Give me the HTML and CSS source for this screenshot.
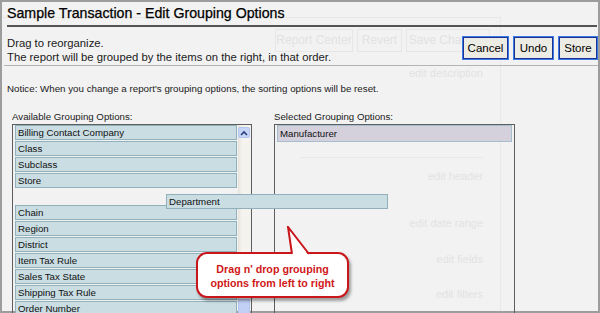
FILE: index.html
```html
<!DOCTYPE html>
<html lang="en">
<head>
  <meta charset="UTF-8">
  <title>Sample Transaction - Edit Grouping Options</title>
  <link rel="stylesheet" href="styles.css">
</head>
<body>
  <!-- page behind the dialog, washed out -->
  <div class="ghost">
    <div class="ghost-btns">
      <span class="gb1">Report Center</span>
      <span class="gb2">Revert</span>
      <span class="gb3">Save Changes</span>
    </div>
    <div class="ghost-links">
      <span class="gl1">edit description</span>
      <span class="ghost-sep"></span>
      <span class="gl2">edit header</span>
      <span class="gl3">edit date range</span>
      <span class="gl4">edit fields</span>
      <span class="gl5">edit filters</span>
    </div>
  </div>

  <div class="dialog">
    <h1 class="title">Sample Transaction - Edit Grouping Options</h1>

    <div class="head">
      <div class="intro">
        <div>Drag to reorganize.</div>
        <div>The report will be grouped by the items on the right, in that order.</div>
      </div>
      <div class="actions">
        <button class="btn">Cancel</button>
        <button class="btn">Undo</button>
        <button class="btn">Store</button>
      </div>
    </div>

    <div class="notice">Notice: When you change a report's grouping options, the sorting options will be reset.</div>

    <div class="columns">
      <div class="col">
        <div class="label">Available Grouping Options:</div>
        <div class="box">
          <div class="list">
            <div class="item">Billing Contact Company</div>
            <div class="item">Class</div>
            <div class="item">Subclass</div>
            <div class="item">Store</div>
            <div class="slot"></div>
            <div class="item">Chain</div>
            <div class="item">Region</div>
            <div class="item">District</div>
            <div class="item">Item Tax Rule</div>
            <div class="item">Sales Tax State</div>
            <div class="item">Shipping Tax Rule</div>
            <div class="item">Order Number</div>
          </div>
          <div class="scrollbar">
            <div class="arrow">
              <svg width="8" height="6" viewBox="0 0 8 6"><path d="M1 5 L4 2 L7 5" fill="none" stroke="#2b3f7a" stroke-width="1.6"/></svg>
            </div>
            <div class="thumb"></div>
          </div>
        </div>
      </div>
      <div class="col">
        <div class="label">Selected Grouping Options:</div>
        <div class="box selected">
          <div class="list">
            <div class="item picked">Manufacturer</div>
          </div>
        </div>
      </div>
    </div>

    <div class="item dragging">Department</div>

    <div class="callout">
      <svg class="pointer" width="30" height="32" viewBox="0 0 30 32">
        <polygon points="4,1 8,30 25,30" fill="#fff"/>
        <polyline points="8,28 4,1 25,28" fill="none" stroke="#c8161b" stroke-width="2"/>
      </svg>
      Drag n' drop grouping<br>options from left to right
    </div>
  </div>
</body>
</html>
```

FILE: styles.css
```css
body {
  margin: 0;
  width: 600px;
  height: 313px;
  overflow: hidden;
  position: relative;
  background-color: #f2f2f2;
  font-family: "Liberation Sans", Arial, sans-serif;
  color: #111;
}

/* washed out page underneath */
.ghost {
  width: 500px;
  height: 296px;
  margin-top: 17px;
  border-top: 1px solid #e7e7e7;
  border-right: 1px solid #e9e9e9;
  color: #e2e2e2;
  font-size: 11px;
}
.ghost-btns {
  display: flex;
  justify-content: flex-end;
  gap: 4px;
  padding: 11px 10px 0 0;
  height: 23px;
}
.ghost-btns span {
  border: 1px solid #e6e6e6;
  box-sizing: border-box;
  height: 23px;
  line-height: 21px;
  font-size: 12px;
  text-align: center;
}
.gb1 { width: 78px; }
.gb2 { width: 45px; }
.gb3 { width: 84px; }
.ghost-links {
  display: flex;
  flex-direction: column;
  align-items: flex-end;
  padding-right: 17px;
  line-height: 14px;
}
.gl1 { margin-top: 14px; }
.ghost-sep {
  align-self: stretch;
  margin: 77px 0 11px 300px;
  border-top: 1px solid #e8e8e8;
}
.gl3 { margin-top: 33px; }
.gl4 { margin-top: 22px; }
.gl5 { margin-top: 21px; }

/* dialog */
.dialog {
  position: absolute;
  left: 0;
  top: 0;
  width: 600px;
  height: 313px;
  box-sizing: border-box;
  border: 2px solid #9d9d9d;
  padding: 3px 0 0 5px;
}
.title {
  margin: 0 1px 0 0;
  font-size: 14.2px;
  font-weight: normal;
  line-height: 17px;
  padding-bottom: 3px;
  border-bottom: 2px solid #555;
  color: #000;
  -webkit-text-stroke: 0.25px #000;
}
.head {
  display: flex;
  justify-content: space-between;
  margin: 9px 0 0 -3px;
  padding: 0 0 1px 3px;
  border-bottom: 1px solid #b4b4b4;
}
.intro {
  font-size: 11.3px;
  line-height: 14px;
  color: #1a1a1a;
}
.actions {
  display: flex;
  gap: 4px;
  height: 24px;
}
.btn {
  font-family: "Liberation Sans", Arial, sans-serif;
  font-size: 11.5px;
  color: #000;
  background-color: #ecebe4;
  border: 1px solid #3b78ea;
  box-shadow: inset 0 0 0 1px #1c3490;
  padding: 0;
  height: 24px;
}
.btn:nth-child(1) { width: 47px; }
.btn:nth-child(2) { width: 41px; }
.btn:nth-child(3) { width: 40px; }

.notice {
  font-size: 9.75px;
  line-height: 12px;
  margin-top: 17px;
  color: #1a1a1a;
}

.columns {
  display: flex;
  gap: 22px;
  margin-top: 16px;
  padding-left: 5px;
}
.label {
  font-size: 9.7px;
  line-height: 12px;
  margin-bottom: 1px;
  color: #1a1a1a;
}
.box {
  width: 240px;
  height: 200px;
  box-sizing: border-box;
  border: 1px solid #5e5e5e;
  display: flex;
}
.box.selected {
  width: 241px;
}
.list {
  flex: 1;
  display: flex;
  flex-direction: column;
  gap: 1px;
  padding: 0 1px 0 2px;
}
.item {
  height: 15px;
  box-sizing: border-box;
  border: 1px solid #90b1bb;
  background-color: #c9dde3;
  font-size: 9.7px;
  line-height: 13px;
  padding-left: 2px;
  color: #111;
}
.slot {
  height: 15px;
}
.item.picked {
  height: 17px;
  line-height: 15px;
  background-color: #d4d0dc;
  border-color: #a7bece;
  margin-right: 1px;
}
.scrollbar {
  width: 12px;
  margin-right: 1px;
  display: flex;
  flex-direction: column;
  justify-content: space-between;
  background: linear-gradient(to right, #e4e2da, #f4f3ee 4px);
  height: 190px;
}
.arrow {
  height: 11px;
  margin-top: 2px;
  background-color: #c6d4f6;
  border: 1px solid #b4c6ef;
  box-sizing: border-box;
  border-radius: 2px;
  display: flex;
  align-items: center;
  justify-content: center;
}
.thumb {
  height: 16px;
  background-color: #c2d0f6;
  border: 1px solid #b2c3ee;
  box-sizing: border-box;
}

.dragging {
  position: absolute;
  left: 164px;
  top: 192px;
  width: 222px;
}

.callout {
  position: absolute;
  left: 194px;
  top: 250px;
  width: 153px;
  height: 46px;
  box-sizing: border-box;
  border: 2px solid #c8161b;
  border-radius: 11px;
  background-color: #fff;
  box-shadow: 2px 3px 3px rgba(0, 0, 0, 0.35);
  color: #d01818;
  font-weight: bold;
  font-size: 10.7px;
  line-height: 14px;
  text-align: center;
  padding-top: 8px;
}
.pointer {
  position: absolute;
  left: 86px;
  top: -28px;
}
```
